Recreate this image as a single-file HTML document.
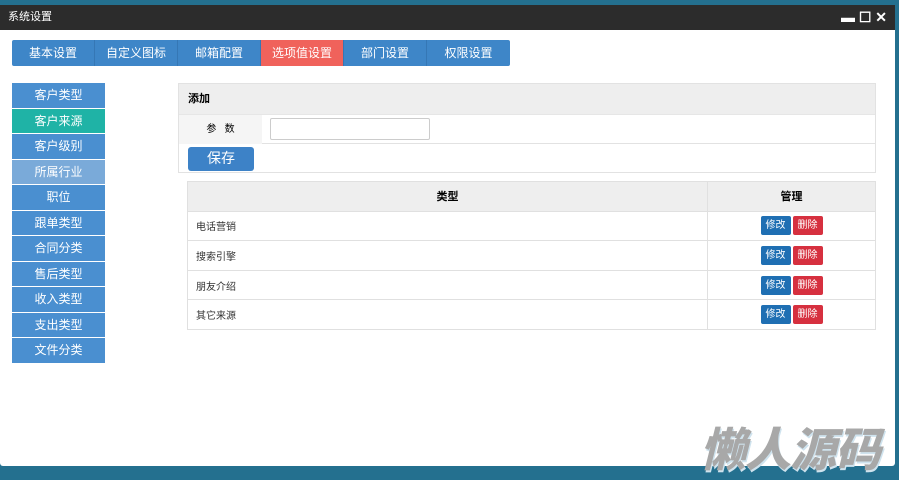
<!DOCTYPE html>
<html><head><meta charset="utf-8"><style>
*{margin:0;padding:0;box-sizing:border-box}
body{width:899px;height:480px;overflow:hidden;background:#24708f;font-family:"Liberation Sans","Noto Sans CJK SC",sans-serif;position:relative}
.win{position:absolute;left:0;top:5px;width:895px;height:461px;background:#fff;border-radius:0 0 3px 3px}
.title{height:25px;background:#2c2c2c;color:#fff;font-size:11px;line-height:25px;padding-left:8px}
.ctl{position:absolute;right:8px;top:5px;color:#fff;font-size:14px;line-height:14px;font-weight:bold}
.tabs{position:absolute;left:12px;top:35px;width:498px;height:26px;background:#3e86c8;display:flex;border-radius:2px}
.tabs div{width:83px;text-align:center;color:#fff;font-size:12px;line-height:26px;border-right:1px solid #3577b5}
.tabs .on{background:#f0625b}
.side{position:absolute;left:12px;top:78px;width:93px}
.side div{height:24.5px;margin-bottom:1px;background:#4a8fd0;color:#fff;font-size:12px;text-align:center;line-height:24px}
.side .t{background:#1fb3a6}.side .l{background:#7aaad9}
.panel{position:absolute;left:178px;top:78px;width:698px;height:90px;border:1px solid #e2e2e2}
.ph{height:30px;background:#eee;font-size:11px;font-weight:bold;line-height:30px;padding-left:9px}
.pr{height:30px;border-bottom:1px solid #e2e2e2;border-top:1px solid #e6e6e6;position:relative}
.pr .lb{position:absolute;left:0;top:0;width:83px;height:29px;background:#f5f5f5;font-size:10px;text-align:center;line-height:29px}
.pr input{position:absolute;left:91px;top:3px;width:160px;height:22px;border:1px solid #ccc;border-radius:2px}
.save{position:absolute;left:9px;top:63px;width:66px;height:24px;background:#3d82c7;color:#fff;font-size:14px;text-align:center;line-height:22px;border-radius:3px}
table{position:absolute;left:187px;top:176px;width:689px;border-collapse:collapse;font-size:10px;color:#333}
td,th{border:1px solid #e0e0e0;height:29.6px}
th{background:#eee;font-size:11px;font-weight:bold;color:#000}
td{padding-left:8px}
td.m{text-align:center;padding:0;width:168px}
.b{display:inline-block;width:30px;height:19px;line-height:19px;color:#fff;font-size:10px;border-radius:2px;margin:0 1px}
.bb{background:#1f6fb3}.br{background:#d6303f}
.wm{position:absolute;left:700px;top:414px;font-size:46px;font-weight:900;font-style:italic;color:#a8a8a8;letter-spacing:-1px;text-shadow:1px 2px 0 #cfe3ee}
</style></head><body>
<div class="win">
<div class="title">系统设置</div>
<div class="ctl">▬ ☐ ✕</div>
<div class="tabs"><div>基本设置</div><div>自定义图标</div><div>邮箱配置</div><div class="on">选项值设置</div><div>部门设置</div><div style="border:0">权限设置</div></div>
<div class="side"><div>客户类型</div><div class="t">客户来源</div><div>客户级别</div><div class="l">所属行业</div><div>职位</div><div>跟单类型</div><div>合同分类</div><div>售后类型</div><div>收入类型</div><div>支出类型</div><div>文件分类</div></div>
<div class="panel"><div class="ph">添加</div><div class="pr"><div class="lb">参 &nbsp; 数</div><input></div><div class="save">保存</div></div>
<table><tr><th>类型</th><th>管理</th></tr>
<tr><td>电话营销</td><td class="m"><span class="b bb">修改</span><span class="b br">删除</span></td></tr>
<tr><td>搜索引擎</td><td class="m"><span class="b bb">修改</span><span class="b br">删除</span></td></tr>
<tr><td>朋友介绍</td><td class="m"><span class="b bb">修改</span><span class="b br">删除</span></td></tr>
<tr><td>其它来源</td><td class="m"><span class="b bb">修改</span><span class="b br">删除</span></td></tr>
</table>
</div>
<div class="wm">懒人源码</div>
</body></html>
